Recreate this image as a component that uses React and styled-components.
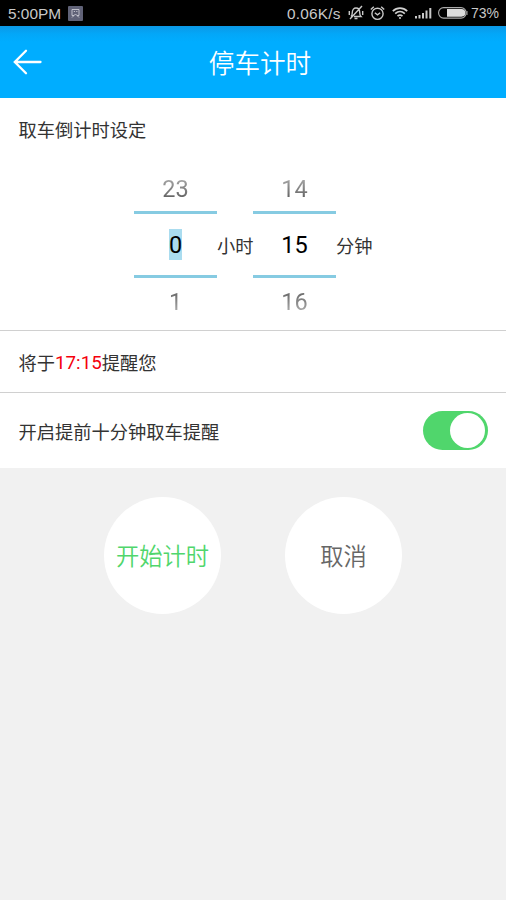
import { useState } from "react";
import styled, { createGlobalStyle } from "styled-components";

const GlobalStyle = createGlobalStyle`
    * {
        box-sizing: border-box;
    }
    body {
        margin: 0;
        background: #f1f1f1;
        font-family: Roboto, "Noto Sans CJK SC", sans-serif;
    }
`

const Container = styled.div`
    width: 100%;
    min-height: 100vh;
    background: #f1f1f1;
    color: #333;
`

const StatusBar = styled.div`
    height: 26px;
    padding: 0 7px 0 8px;
    background: #000;
    color: #c8c8c8;
    display: flex;
    align-items: center;
    font-family: "Liberation Sans", sans-serif;
    white-space: nowrap;

    svg {
        display: block;
        flex: none;
    }
`

const StatusText = styled.span`
    width: ${props => props.$width}px;
    font-size: ${props => props.$size}px;
    line-height: 27px;
    letter-spacing: ${props => props.$spacing || 0}px;
`

const StatusIcons = styled.div`
    margin-left: auto;
    display: flex;
    align-items: center;
`

const IconSlot = styled.div`
    margin-left: ${props => props.$gap}px;
`

const Header = styled.header`
    height: 72px;
    padding: 0 13px;
    background: linear-gradient(#0b98e6 0, #03a7f8 8px, #00adff 16px);
    color: #fff;
    display: grid;
    grid-template-columns: 32px 1fr 18px;
    align-items: center;
`

const BackButton = styled.button`
    padding: 0;
    border: 0;
    background: none;
    color: inherit;
    cursor: pointer;

    svg {
        display: block;
    }
`

const Title = styled.h1`
    margin: 0;
    padding-top: 4px;
    font-size: 25.6px;
    font-weight: 350;
    line-height: 68px;
    text-align: center;
`

const Section = styled.section`
    height: ${props => props.$height}px;
    padding: 0 18px;
    background: #fff;
    border-bottom: ${props => (props.$last ? "0" : "1px solid #d0d0d0")};
    font-size: 18.25px;
`

const Row = styled(Section)`
    display: flex;
    align-items: center;
    justify-content: space-between;
`

const Label = styled.h2`
    margin: 0;
    padding-top: 3px;
    font-size: inherit;
    font-weight: 400;
    line-height: 59px;
`

const Text = styled.span`
    padding-left: 0.5px;
`

const Time = styled.span`
    color: #f5000c;
    font-size: 18.8px;
    vertical-align: 1px;
    line-height: 1;
`

const Pickers = styled.div`
    display: flex;
    justify-content: center;
    align-items: center;
`

const Wheel = styled.div`
    width: 83px;
    height: 170px;
    display: flex;
    flex-direction: column;
    align-items: center;
    font-size: 23.5px;
`

const Faded = styled.div`
    height: ${props => (props.$up ? 51 : 52)}px;
    width: 100%;
    line-height: ${props => (props.$up ? 59 : 49)}px;
    text-align: center;
    color: transparent;
    background: linear-gradient(${props => (props.$up ? "to top" : "to bottom")}, #666 14px, #bbb 38px);
    background-clip: text;
    cursor: pointer;
`

const Selected = styled.div`
    width: 100%;
    height: 68px;
    border-top: 3px solid #86cbe2;
    border-bottom: 3px solid #86cbe2;
    display: flex;
    align-items: center;
    justify-content: center;
    color: #000;
`

const Value = styled.span`
    height: 31px;
    line-height: 32px;
    background: ${props => (props.$marked ? "#aadcef" : "none")};
`

const Unit = styled.span`
    width: 36px;
    padding-top: 3px;
    line-height: 30px;
    white-space: nowrap;
`

const Switch = styled.button`
    width: 65px;
    height: 39px;
    padding: 2px 3px 2px 2px;
    border: 0;
    border-radius: 20px;
    background: ${props => (props.$on ? "#50d66c" : "#d8d8d8")};
    display: flex;
    justify-content: ${props => (props.$on ? "flex-end" : "flex-start")};
    cursor: pointer;
`

const Knob = styled.span`
    width: 35px;
    height: 35px;
    border-radius: 50%;
    background: #fff;
`

const Actions = styled.div`
    padding-top: 28.5px;
    display: flex;
    justify-content: center;
    gap: 64px;
`

const RoundButton = styled.button`
    width: 117px;
    height: 117px;
    padding: 0;
    border: 0;
    border-radius: 50%;
    background: #fff;
    color: ${props => props.color};
    font-family: inherit;
    font-size: 23.3px;
    font-weight: 350;
    cursor: pointer;
`

const AppBadge = () => (
    <svg width="15" height="15" viewBox="0 0 15 15" fill="none">
        <rect width="15" height="15" rx="1" fill="#606277" />
        <path d="M4 9.500V3.500h7v6M5.800 5.500h1.200M8.200 5.500h1.200M4 11.500l3.500-3.500 3.500 3.500M4 9.500h2M9 9.500h2" stroke="#c9cad3" strokeWidth=".9" />
    </svg>
)

const MutedBell = () => (
    <svg width="16" height="16" viewBox="0 0 16 16" fill="none" stroke="#c8c8c8" strokeWidth="1.4">
        <path d="M3 11.500c1-1 1.300-2 1.300-4C4.300 4.500 6 3 8 3s3.700 1.500 3.700 4.500c0 2 .3 3 1.300 4H6M6.500 13.500h3M14 1 2 14M1.300 6v4M14.700 6v4" />
    </svg>
)

const AlarmClock = () => (
    <svg width="15" height="15" viewBox="0 0 15 15" fill="none" stroke="#c8c8c8" strokeWidth="1.400">
        <circle cx="7.500" cy="7.800" r="5.600" />
        <path d="m.8 3.600 3-2.800M14.200 3.600l-3-2.800M4.800 6.800l2.700 2 2.700-2" />
    </svg>
)

const Wifi = () => (
    <svg width="16" height="14" viewBox="0 0 16 14" fill="none" stroke="#d0d0d0" strokeWidth="1.700">
        <path d="M.8 5.200c4.200-4.100 10.200-4.100 14.400 0M3.200 7.700c2.900-2.700 6.700-2.700 9.600 0M5.500 10.100c1.600-1.300 3.400-1.300 5 0" />
        <circle cx="8" cy="12" r="1" fill="#d0d0d0" stroke="none" />
    </svg>
)

const Signal = () => (
    <svg width="17" height="12" viewBox="0 0 17 12" fill="#c8c8c8">
        <path d="M0 9h2v2.500H0zM3.500 8h2v3.500h-2zM7 6h2v5.500H7zM10.500 3.500h2v8h-2zM14.300 1h2v10.500h-2z" />
    </svg>
)

const Battery = () => (
    <svg width="30" height="12" viewBox="0 0 30 12">
        <rect x=".6" y=".6" width="27.500" height="10.500" rx="5" fill="none" stroke="#aaa" strokeWidth="1.100" />
        <path d="M9 2h14.500a3.850 3.850 0 0 1 0 7.700H9z" fill="#ddd" />
        <path d="M28.500 4h1v4h-1z" fill="#aaa" />
    </svg>
)

const wrap = (value, max) => (value + max) % max;

const NumberWheel = ({ value, max, marked, onChange }) => (
    <Wheel>
        <Faded $up onClick={() => onChange(wrap(value - 1, max))}>{wrap(value - 1, max)}</Faded>
        <Selected>
            <Value $marked={marked}>{value}</Value>
        </Selected>
        <Faded onClick={() => onChange(wrap(value + 1, max))}>{wrap(value + 1, max)}</Faded>
    </Wheel>
)

const App = () => {
    const [hours, setHours] = useState(0);
    const [minutes, setMinutes] = useState(15);
    const [remind, setRemind] = useState(true);

    // the countdown starts at 17:00
    const total = 17 * 60 + hours * 60 + minutes;
    const endTime = `${Math.floor(total / 60) % 24}:${String(total % 60).padStart(2, "0")}`;

    return (
        <Container>
            <GlobalStyle />
            <StatusBar>
                <StatusText $width={60} $size={15.4}>5:00PM</StatusText>
                <AppBadge />
                <StatusIcons>
                    <StatusText $width={54} $size={15.4} $spacing={0.2}>0.06K/s</StatusText>
                    <IconSlot $gap={7}><MutedBell /></IconSlot>
                    <IconSlot $gap={6}><AlarmClock /></IconSlot>
                    <IconSlot $gap={7}><Wifi /></IconSlot>
                    <IconSlot $gap={7}><Signal /></IconSlot>
                    <IconSlot $gap={6}><Battery /></IconSlot>
                    <IconSlot $gap={3}><StatusText $width={28} $size={14}>73%</StatusText></IconSlot>
                </StatusIcons>
            </StatusBar>
            <Header>
                <BackButton aria-label="返回">
                    <svg width="29" height="26" viewBox="0 0 29 26" fill="none" stroke="#fff" strokeWidth="2.300" strokeLinecap="round">
                        <path d="M27.500 13H2M13 1.800 1.800 13 13 24.200" />
                    </svg>
                </BackButton>
                <Title>停车计时</Title>
            </Header>
            <Section $height={233}>
                <Label><Text>取车倒计时设定</Text></Label>
                <Pickers>
                    <NumberWheel value={hours} max={24} marked onChange={setHours} />
                    <Unit>小时</Unit>
                    <NumberWheel value={minutes} max={60} onChange={setMinutes} />
                    <Unit>分钟</Unit>
                </Pickers>
            </Section>
            <Row $height={62}>
                <Text>将于<Time>{endTime}</Time>提醒您</Text>
            </Row>
            <Row $height={75} $last>
                <Text>开启提前十分钟取车提醒</Text>
                <Switch $on={remind} onClick={() => setRemind(!remind)} aria-label="提前提醒">
                    <Knob />
                </Switch>
            </Row>
            <Actions>
                <RoundButton color="#50d66c">开始计时</RoundButton>
                <RoundButton color="#666">取消</RoundButton>
            </Actions>
        </Container>
    );
}

export default App;
